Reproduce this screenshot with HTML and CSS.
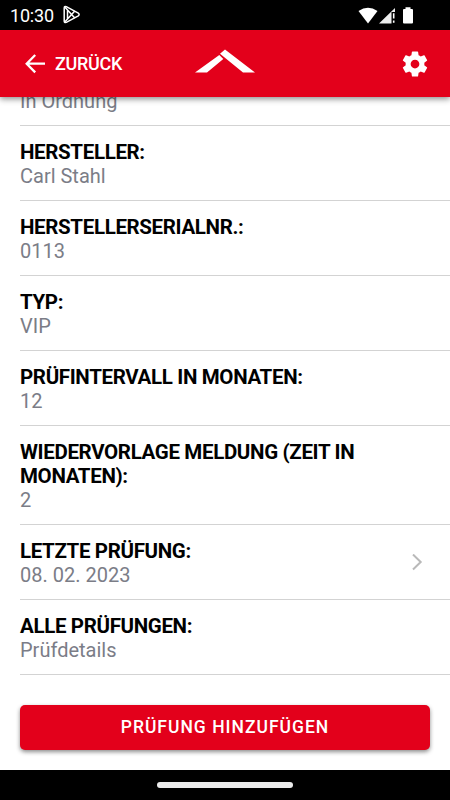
FILE: index.html
```html
<!DOCTYPE html>
<html lang="de">
<head>
<meta charset="utf-8">
<title>Prüfdetails</title>
<link rel="stylesheet" href="styles.css">
</head>
<body>
<div class="screen">
  <div class="status">
    <span class="clock">10:30</span>
    <svg class="play" width="18" height="20" viewBox="0 0 18 20" fill="none" stroke="#fff" stroke-width="1.5" stroke-linejoin="round"><path d="M1.2 3.2Q1.2 1 3.3 1.7L15.3 8.2Q17 9.5 15.3 10.8L3.3 17.4Q1.2 18 1.2 16Z"/><path d="M2 2.3L11.8 13M2 16.8L11.8 6M4.5 5V14"/></svg>
    <svg class="signals" width="58" height="20" viewBox="0 0 58 20"><path d="M.5 5.1Q10 -1.5 19.5 5.1L10 17.5Z" fill="#fff"/><path d="M37 2V6H33.5V17.5H21Z" fill="#eee"/><path d="M35.7 7.2V12.5M35.7 14.5V16.8" stroke="#fff" stroke-width="1.6"/><path d="M47.500 1.200H52.500V3H54Q55 3 55 4V16.500Q55 17.500 54 17.500H46Q45 17.500 45 16.500V4Q45 3 46 3H47.500Z" fill="#fff"/></svg>
  </div>
  <header class="bar">
    <div class="back">
      <svg width="20" height="20" viewBox="0 0 20 20" fill="none" stroke="#fff" stroke-width="2.300"><path d="M10.200 1L1.700 9.700L10.200 18.400M2 9.700H20"/></svg>
      <span>ZURÜCK</span>
    </div>
    <svg class="logo" width="60" height="24" viewBox="0 0 60 24" fill="#fff"><path d="M0 23.500L24.300 6L28.300 10L12 23.500ZM25 4.700L30 .5L60 23.500H48Z"/></svg>
    <svg class="gear" width="30" height="30" viewBox="0 0 24 24" fill="#fff"><path d="M19.430 12.980c.04-.32.070-.64.070-.98s-.03-.66-.07-.98l2.110-1.650c.19-.15.240-.42.120-.64l-2-3.460c-.12-.22-.39-.3-.61-.22l-2.490 1c-.52-.4-1.080-.73-1.690-.98l-.38-2.650C14.460 2.180 14.250 2 14 2h-4c-.25 0-.46.180-.49.420l-.38 2.650c-.61.250-1.170.590-1.690.98l-2.490-1c-.23-.09-.49 0-.61.220l-2 3.460c-.13.220-.07.490.12.640l2.110 1.650c-.04.320-.07.650-.07.980s.03.660.07.980l-2.110 1.650c-.19.150-.24.420-.12.640l2 3.460c.12.220.39.300.61.220l2.490-1c.52.400 1.080.730 1.690.98l.38 2.650c.03.240.24.420.49.420h4c.25 0 .46-.18.490-.42l.38-2.650c.61-.25 1.170-.59 1.690-.98l2.490 1c.23.090.49 0 .61-.22l2-3.460c.12-.22.070-.49-.12-.64l-2.110-1.650zM12 15.500c-1.930 0-3.500-1.570-3.500-3.500s1.570-3.500 3.500-3.500 3.500 1.570 3.500 3.500-1.570 3.500-3.500 3.500z"/></svg>
  </header>
  <main class="content">
    <section class="item clipped"><p class="value">In Ordnung</p></section>
    <section class="item"><h2>HERSTELLER:</h2><p class="value">Carl Stahl</p></section>
    <section class="item"><h2>HERSTELLERSERIALNR.:</h2><p class="value">0113</p></section>
    <section class="item"><h2>TYP:</h2><p class="value">VIP</p></section>
    <section class="item"><h2>PRÜFINTERVALL IN MONATEN:</h2><p class="value">12</p></section>
    <section class="item"><h2>WIEDERVORLAGE MELDUNG (ZEIT IN<br>MONATEN):</h2><p class="value">2</p></section>
    <section class="item link">
      <div><h2>LETZTE PRÜFUNG:</h2><p class="value">08. 02. 2023</p></div>
      <svg width="12" height="18" viewBox="0 0 12 18" fill="none" stroke="#b9b9b9" stroke-width="2"><path d="M2 .5L9.700 8L2 15.500"/></svg>
    </section>
    <section class="item"><h2>ALLE PRÜFUNGEN:</h2><p class="value">Prüfdetails</p></section>
    <button class="add">PRÜFUNG HINZUFÜGEN</button>
  </main>
  <div class="nav"><span class="handle"></span></div>
</div>
</body>
</html>
```
FILE: styles.css
```css
* { box-sizing: border-box; }
body { margin: 0; background: #fff; font-family: Roboto, "Liberation Sans", sans-serif; }
h2, p { margin: 0; }
svg { display: block; flex: none; }
.screen { width: 450px; height: 800px; display: flex; flex-direction: column; overflow: hidden; }
.status { height: 30px; flex: none; background: #000; color: #fff; display: flex; align-items: center; padding: 0 34px 0 10px; }
.clock { font-size: 18px; line-height: 30px; letter-spacing: -.2px; width: 44px; padding-top: 1px; white-space: nowrap; }
.play { margin-left: 9px; }
.signals { margin-left: auto; margin-top: 2px; }
.bar { height: 67px; flex: none; background: #e3001b; color: #fff; display: grid; grid-template-columns: 1fr 60px 1fr; align-items: center; padding: 0 20px 0 25px; box-shadow: 0 2px 6px rgba(0, 0, 0, .45); z-index: 1; }
.back { display: flex; align-items: center; gap: 10px; font-size: 18px; font-weight: 500; letter-spacing: -.3px; }
.back span { padding-bottom: 1px; }
.logo { justify-self: center; margin-left: -5px; margin-top: -5px; }
.gear { justify-self: end; }
.content { flex: 1; min-height: 0; display: flow-root; overflow: hidden; padding-left: 20px; }
.item { padding: 14px 0 12px; border-bottom: 1px solid #d3d3d3; font-size: 20px; line-height: 24px; }
.item h2 { font-size: 20.500px; line-height: 24px; font-weight: 700; letter-spacing: -.35px; color: #000; }
.value { color: #7b7d87; }
.clipped { display: flow-root; height: 29px; padding: 0; }
.clipped .value { margin-top: -8px; }
.link { display: flex; align-items: center; justify-content: space-between; padding-right: 27px; }
.add { display: block; width: 410px; height: 45px; margin: 30px 0 0; padding: 0; border: 0; border-radius: 5px; background: #e3001b; color: #fff; font: 500 17.500px/45px Roboto, "Liberation Sans", sans-serif; letter-spacing: 1px; box-shadow: 0 2px 4px rgba(0, 0, 0, .45); }
.nav { height: 30px; flex: none; background: #000; display: flex; align-items: center; justify-content: center; }
.handle { width: 136px; height: 6px; border-radius: 3px; background: #ebebeb; }
```
